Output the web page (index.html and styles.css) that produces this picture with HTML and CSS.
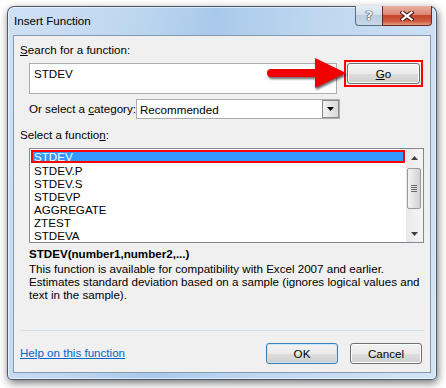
FILE: index.html
```html
<!DOCTYPE html>
<html lang="en">
<head>
  <meta charset="UTF-8">
  <title>Insert Function</title>
  <link rel="stylesheet" href="styles.css">
</head>
<body>

  <div class="window">
    <div class="titlebar">
      <div class="title">Insert Function</div>
      <div class="tb-btn help">?</div>
      <div class="tb-btn close">
        <svg width="14" height="10" viewBox="0 0 14 10">
          <path d="M2.5 1.5 L11.5 8.5 M11.5 1.5 L2.5 8.5" stroke="#4a1c14" stroke-width="4.2" stroke-linecap="square"/>
          <path d="M2.5 1.5 L11.5 8.5 M11.5 1.5 L2.5 8.5" stroke="#fff" stroke-width="2.2" stroke-linecap="square"/>
        </svg>
      </div>
    </div>

    <div class="client">
      <div class="lbl top-lbl"><u>S</u>earch for a function:</div>

      <div class="search-row">
        <div class="textbox">STDEV</div>
        <div class="hl-go">
          <div class="btn go"><u>G</u>o</div>
        </div>
      </div>

      <div class="cat-row">
        <span class="lbl">Or select a <u>c</u>ategory:</span>
        <div class="combo">
          <span class="combo-text">Recommended</span>
          <div class="drop">
            <svg width="7" height="4" viewBox="0 0 7 4"><path d="M0 0 H7 L3.5 4 Z" fill="#000"/></svg>
          </div>
        </div>
      </div>

      <div class="lbl fn-lbl">Select a functio<u>n</u>:</div>

      <div class="listbox">
        <div class="items">
          <div class="item sel">STDEV</div>
          <div class="item">STDEV.P</div>
          <div class="item">STDEV.S</div>
          <div class="item">STDEVP</div>
          <div class="item">AGGREGATE</div>
          <div class="item">ZTEST</div>
          <div class="item">STDEVA</div>
        </div>
        <div class="vscroll">
          <div class="sb-arrow">
            <svg width="7" height="4" viewBox="0 0 7 4"><path d="M3.5 0 L7 4 H0 Z" fill="#404040"/></svg>
          </div>
          <div class="thumb">
            <span></span><span></span><span></span><span></span>
          </div>
          <div class="sb-space"></div>
          <div class="sb-arrow">
            <svg width="7" height="4" viewBox="0 0 7 4"><path d="M0 0 H7 L3.5 4 Z" fill="#404040"/></svg>
          </div>
        </div>
      </div>

      <div class="desc">
        <div class="sig">STDEV(number1,number2,...)</div>
        <p>This function is available for compatibility with Excel 2007 and earlier.<br>
        Estimates standard deviation based on a sample (ignores logical values and<br>
        text in the sample).</p>
      </div>

      <div class="sep"></div>

      <div class="footer">
        <a class="help-link" href="#">Help on this function</a>
        <div class="btn ok">OK</div>
        <div class="btn cancel">Cancel</div>
      </div>

      <!-- red arrow pointing at Go -->
      <svg class="arrow" width="86" height="40" viewBox="0 0 86 40">
        <path d="M6 13 H50 V2 L81 17 L50 32 V21 H6 A4 4 0 0 1 6 13 Z" fill="#f20000"/>
      </svg>
    </div>
  </div>

</body>
</html>
```

FILE: styles.css
```css
* {
  box-sizing: border-box;
}

html, body {
  margin: 0;
  width: 446px;
  height: 388px;
  overflow: hidden;
  background: #fff;
}

body {
  font-family: "Liberation Sans", Arial, sans-serif;
  font-size: 11.6px;
  color: #000;
}

.window {
  margin: 6px 0 0 7px;
  width: 430px;
  height: 374px;
  border: 1px solid rgba(40, 55, 72, 0.8);
  border-radius: 7px 7px 5px 5px;
  background: linear-gradient(100deg, #cfe1f4 0%, #bcd5ef 28%, #a9c9eb 42%, #bed6f0 62%, #d3e4f6 100%);
  box-shadow: 1px 3px 8px rgba(0, 0, 0, 0.55), inset 0 0 0 1px rgba(255, 255, 255, 0.55);
  padding: 0 5px 6px 5px;
  display: flex;
  flex-direction: column;
}

.titlebar {
  height: 28px;
  display: flex;
  align-items: flex-start;
}

.title {
  flex: 1;
  padding: 7px 0 0 1px;
  line-height: 13px;
}

.tb-btn {
  margin-top: -1px;
  height: 20px;
  display: flex;
  align-items: center;
  justify-content: center;
  border: 1px solid #5d6e82;
  border-top: none;
}

.help {
  width: 27px;
  border-right: none;
  border-radius: 0 0 0 4px;
  background: linear-gradient(#e4ecf5 0%, #d3dfec 45%, #bccde0 50%, #c9d8e8 100%);
  font-family: "DejaVu Sans", sans-serif;
  font-weight: bold;
  font-size: 13px;
  color: #f4f7fa;
  text-shadow: 0 0 1px #2b3a4a, 0 0 1px #2b3a4a, 0 0 1px #2b3a4a;
}

.close {
  width: 50px;
  margin-right: -1px;
  border-color: #6b2a20;
  border-radius: 0 0 4px 0;
  background: linear-gradient(#eab0a3 0%, #dc8672 45%, #c8442c 50%, #cf5a40 80%, #e39a7f 100%);
}

.client {
  position: relative;
  flex: 1;
  border: 1px solid #8599ae;
  background: #f0f0f0;
  padding: 7px 7px 0 6px;
}

.lbl {
  line-height: 14px;
  white-space: nowrap;
}

.search-row {
  display: flex;
  align-items: flex-start;
  margin-top: 3px;
  padding-left: 9px;
}

.textbox {
  margin-top: 3px;
  width: 311px;
  height: 31px;
  border: 1px solid #abadb3;
  background: #fff;
  padding: 3px 0 0 4px;
  line-height: 14px;
}

.hl-go {
  margin-left: 7px;
  width: 80px;
  height: 27px;
  border: 2px solid #f00;
  padding: 1px;
}

.btn {
  display: flex;
  align-items: center;
  justify-content: center;
  height: 21px;
  border: 1px solid #707070;
  border-radius: 3px;
  background: linear-gradient(#f2f2f2 0%, #ebebeb 50%, #dddddd 51%, #cfcfcf 100%);
  box-shadow: inset 0 0 0 1px #fbfbfb;
}

.cat-row {
  display: flex;
  align-items: center;
  margin-top: 5px;
  padding-left: 9px;
  width: 320px;
}

.combo {
  margin-left: auto;
  width: 204px;
  height: 20px;
  border: 1px solid #abadb3;
  background: #fff;
  display: flex;
  align-items: center;
  padding-left: 3px;
}

.combo-text {
  flex: 1;
}

.drop {
  width: 17px;
  height: 18px;
  border: 1px solid #8a8a8a;
  background: linear-gradient(90deg, #f2f2f2, #dadada);
  display: flex;
  align-items: center;
  justify-content: center;
}

.fn-lbl {
  margin-top: 9px;
}

.listbox {
  margin: 6px 0 0 9px;
  width: 395px;
  height: 95px;
  border: 1px solid #828790;
  background: #fff;
  display: flex;
}

.items {
  flex: 1;
  padding: 1px;
}

.item {
  height: 13px;
  padding-left: 3px;
  line-height: 13px;
}

.item.sel {
  margin-bottom: 1px;
  border: 2px solid #f00;
  background: #3399ff;
  color: #fff;
  padding-left: 1px;
  line-height: 9px;
}

.vscroll {
  width: 17px;
  background: linear-gradient(90deg, #e9e9e9, #f5f5f5);
  display: flex;
  flex-direction: column;
}

.sb-arrow {
  height: 17px;
  display: flex;
  align-items: center;
  justify-content: center;
}

.thumb {
  margin: 2px 2px 0 1px;
  height: 41px;
  border: 1px solid #9a9a9a;
  border-radius: 2px;
  background: linear-gradient(90deg, #f3f3f3, #e2e2e2 50%, #d0d0d0);
  display: flex;
  flex-direction: column;
  align-items: center;
  justify-content: center;
  gap: 1px;
}

.thumb span {
  width: 6px;
  height: 1px;
  background: #6a6a6a;
}

.sb-space {
  flex: 1;
}

.desc {
  padding-left: 9px;
  margin-top: 4px;
  white-space: nowrap;
}

.sig {
  font-weight: bold;
  line-height: 14px;
}

.desc p {
  margin: 1px 0 0;
  line-height: 13px;
}

.sep {
  margin-top: 29px;
  width: 404px;
  height: 1px;
  background: #d5dfe8;
}

.footer {
  display: flex;
  align-items: center;
  margin-top: 12px;
  padding-right: 1px;
}

.help-link {
  flex: 1;
  color: #0066cc;
  text-decoration: underline;
  margin-top: -3px;
}

.ok {
  width: 72px;
  border-color: #3c7fb1;
  box-shadow: inset 0 0 0 1px #c3e6fa;
}

.cancel {
  width: 72px;
  margin-left: 12px;
}

.arrow {
  position: absolute;
  left: 251px;
  top: 20px;
  filter: drop-shadow(1px 2px 1px rgba(0, 0, 0, 0.6));
}
```
